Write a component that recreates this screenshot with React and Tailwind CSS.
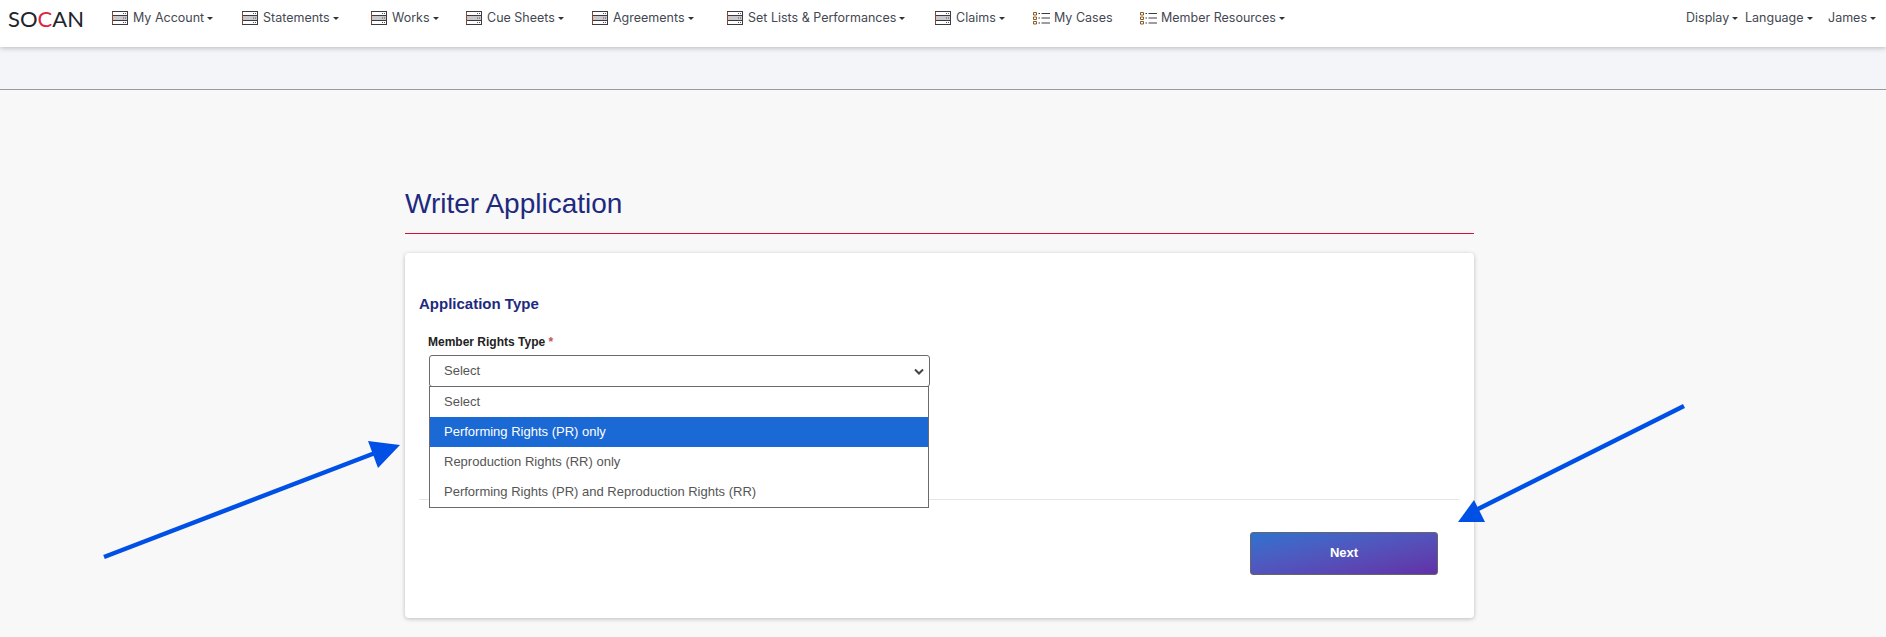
import React from 'react';

const sans = 'font-["Liberation_Sans",Arial,sans-serif]';

const ServerIcon = () => (
  <svg width="17" height="15" viewBox="0 0 17 15" className="shrink-0" fill="none">
    <rect x="0.5" y="0.5" width="15" height="13" fill="#fff" stroke="#3b3a45" />
    <rect x="1" y="5" width="14" height="4" fill="#c9c9cc" />
    <path d="M1 4.5H15M1 9.5H15" stroke="#3b3a45" />
    <path d="M11 2.5H14M11 7H14M11 11.5H14" stroke="#555" strokeDasharray="1 1" />
    <path d="M0.5 1V13" stroke="#8a4a2a" />
  </svg>
);

const ListIcon = () => (
  <svg width="18" height="15" viewBox="0 0 18 15" className="shrink-0" fill="none">
    <path d="M1.5 1.5H4.5V4H1.5ZM1.5 6H4.5V8.5H1.5ZM1.5 10.5H4.5V13H1.5Z" stroke="#8a5a20" />
    <path d="M6.5 2.5H8M9.5 2.5H18M6.5 7H8M9.5 7H18M6.5 12H8M9.5 12H18" stroke="#3b3a45" />
  </svg>
);

const Caret = () => (
  <span className="ml-[3px] inline-block h-0 w-0 border-x-[3px] border-t-[3px] border-x-transparent border-t-[#333]" />
);

const menu = [
  { label: 'My Account', icon: 'server', caret: true, width: 'w-[130px]' },
  { label: 'Statements', icon: 'server', caret: true, width: 'w-[129px]' },
  { label: 'Works', icon: 'server', caret: true, width: 'w-[95px]' },
  { label: 'Cue Sheets', icon: 'server', caret: true, width: 'w-[126px]' },
  { label: 'Agreements', icon: 'server', caret: true, width: 'w-[135px]' },
  { label: 'Set Lists & Performances', icon: 'server', caret: true, width: 'w-[208px]' },
  { label: 'Claims', icon: 'server', caret: true, width: 'w-[97px]' },
  { label: 'My Cases', icon: 'list', caret: false, width: 'w-[107px]' },
  { label: 'Member Resources', icon: 'list', caret: true, width: 'w-auto' },
];

const options = [
  'Performing Rights (PR) only',
  'Reproduction Rights (RR) only',
  'Performing Rights (PR) and Reproduction Rights (RR)',
];

const App = () => {
  return (
    <div className={`relative h-[637px] overflow-hidden bg-[#f8f8f8] ${sans}`}>
      <header className="relative z-10 flex h-[47px] items-center bg-white pb-[10px] pl-[8px] pr-[10px] shadow-[0_1px_5px_rgba(0,0,0,0.25)] font-['Inter',sans-serif] text-[12.5px] text-[#444852]">
        <div className="mr-[24px] w-[80px] text-[22px] leading-none text-[#23232b] font-['Lato',sans-serif]">
          SO<span className="text-[#e0243e]">C</span>AN
        </div>
        <nav className="flex items-center">
          {menu.map((m) => (
            <div key={m.label} className={`flex items-center gap-[4px] ${m.width}`}>
              {m.icon === 'server' ? <ServerIcon /> : <ListIcon />}
              <span className="flex items-center whitespace-nowrap">
                {m.label}
                {m.caret && <Caret />}
              </span>
            </div>
          ))}
        </nav>
        <div className="ml-auto flex items-center">
          <span className="flex w-[59px] items-center">Display<Caret /></span>
          <span className="flex w-[83px] items-center">Language<Caret /></span>
          <span className="flex items-center">James<Caret /></span>
        </div>
      </header>

      <div className="h-[43px] border-b border-[#9a9a9a] bg-[#f4f5f9]" />

      <main className="ml-[405px] w-[1069px] pt-[98px]">
        <h1 className="h-[46px] border-b border-[#d5103a] text-[28px] leading-[32px] font-normal text-[#1e2a7e]">
          Writer Application
        </h1>

        <section className="mt-[19px] h-[365px] rounded-[4px] bg-white px-[14px] pt-[43px] shadow-[0_1px_4px_rgba(0,0,0,0.25)]">
          <h2 className="text-[15px] leading-[16px] font-bold text-[#1e2a7e]">Application Type</h2>

          <div className="relative ml-[9px] mt-[22px]">
            <label className="block h-[21px] text-[12px] leading-[16px] font-bold text-[#222]">
              Member Rights Type <span className="text-[#c0564f]">*</span>
            </label>
            <div className="ml-[1px] flex h-[32px] w-[501px] items-center justify-between rounded-[3px] border border-[#6b6b6b] bg-white pl-[14px] pr-[3px] text-[13px] text-[#555]">
              <span>Select</span>
              <svg width="14" height="14" viewBox="0 0 14 14" fill="none">
                <path d="M3 5.5L7 9.5L11 5.5" stroke="#444" strokeWidth="2" />
              </svg>
            </div>
            {/* open native-looking list sits over the form */}
            <ul className="absolute left-[1px] top-[52px] z-10 w-[500px] border border-[#6b6b6b] bg-white text-[13px] text-[#555]">
              <li className="flex h-[30px] items-center pl-[14px]">Select</li>
              {options.map((o, i) => (
                <li
                  key={o}
                  className={`flex h-[30px] items-center pl-[14px] ${i === 0 ? 'bg-[#1a69d4] text-white' : ''}`}
                >
                  {o}
                </li>
              ))}
            </ul>
          </div>

          <hr className="mt-[112px] w-[1040px] border-[#e5e5e5]" />

          <div className="mt-[32px] flex justify-end pr-[22px]">
            <button className="h-[43px] w-[188px] rounded-[3px] border border-[#666] bg-linear-to-br from-[#2b72cf] to-[#6230a8] pb-[2px] text-[13px] font-bold text-white">
              Next
            </button>
          </div>
        </section>
      </main>

      {/* annotation arrows drawn over the screenshot */}
      <svg className="pointer-events-none absolute left-0 top-0 z-20" width="1886" height="637" fill="none">
        <path d="M104 557L375 453" stroke="#0050e6" strokeWidth="4.5" />
        <polygon points="400,445 368,441 378,468" fill="#0050e6" />
        <path d="M1684 406L1476 510" stroke="#0050e6" strokeWidth="4.5" />
        <polygon points="1458,522 1474,500 1485,522" fill="#0050e6" />
      </svg>
    </div>
  );
};

export default App;
